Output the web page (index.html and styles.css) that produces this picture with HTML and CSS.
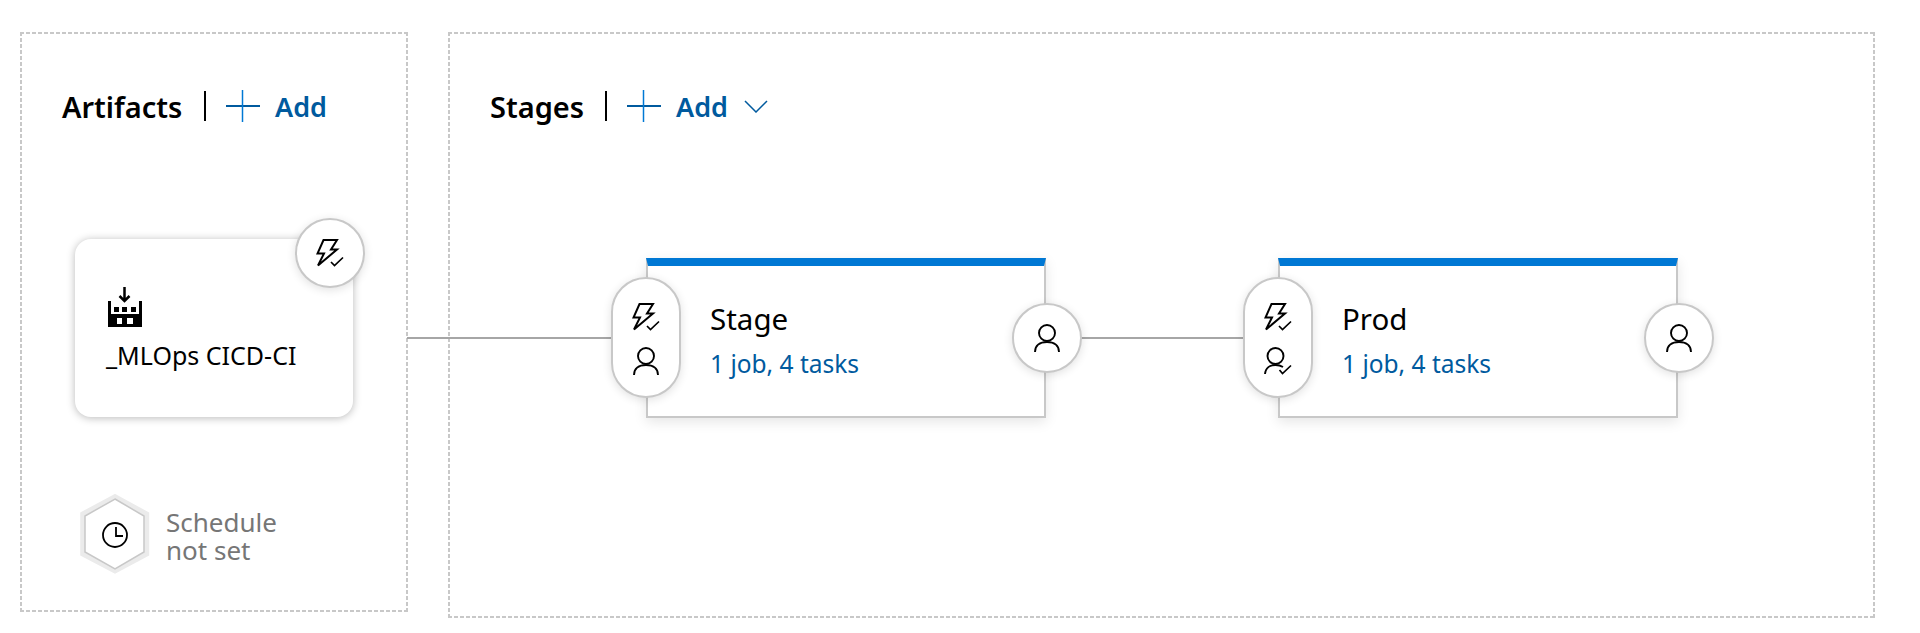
FILE: index.html
```html
<!DOCTYPE html>
<html>
<head>
<title>Pipeline</title>
<link rel="stylesheet" href="styles.css">
</head>
<body>

<div class="pipeline">
  <div class="link-artifact"></div>

  <div class="panel artifacts">
    <div class="panel-head">
      <span class="panel-title title-artifacts">Artifacts</span>
      <span class="sep sep-artifacts"></span>
      <svg class="plus" viewBox="0 0 34 32"><path class="plus-h" d="M0 16H34"/><path class="plus-v" d="M16.500 0V32"/></svg>
      <span class="add">Add</span>
    </div>

    <div class="artifact-card">
      <svg class="factory" viewBox="0 0 34 40">
        <path d="M0 14H3V27H31V14H34V40H0Z"/>
        <rect x="6" y="20" width="5" height="5"/>
        <rect x="14" y="20" width="5" height="5"/>
        <rect x="23" y="20" width="5" height="5"/>
        <rect class="window" x="9" y="31" width="5" height="6"/>
        <rect class="window" x="19" y="31" width="6" height="6"/>
        <path class="arrow" d="M16.500 0V13M11.500 9L16.500 14L21.500 9"/>
      </svg>
      <div class="artifact-name">_MLOps CICD-CI</div>
      <div class="round-btn artifact-trigger">
        <svg class="bolt" viewBox="0 0 28 28"><path class="bolt-shape" d="M7.500 1H21L15 10.500H21L2 26.500L8 14.500H1.500Z"/><path class="tick" d="M15 23L18.500 26.500L27 18.500"/></svg>
      </div>
    </div>

    <div class="schedule">
      <svg class="hex" viewBox="0 0 72 80">
        <polygon class="hex-out" points="36,2.700 67.700,20 67.700,60 36,77 3.700,60 3.700,20"/>
        <polygon class="hex-in" points="36,5 65,22 65,58 36,75 6,58 6,22"/>
        <circle class="clock" cx="36" cy="41" r="12"/>
        <path class="clock" d="M37 33V42H44"/>
      </svg>
      <div class="schedule-text">Schedule<br>not set</div>
    </div>
  </div>

  <div class="panel stages">
    <div class="panel-head">
      <span class="panel-title title-stages">Stages</span>
      <span class="sep sep-stages"></span>
      <svg class="plus" viewBox="0 0 34 32"><path class="plus-h" d="M0 16H34"/><path class="plus-v" d="M16.500 0V32"/></svg>
      <span class="add">Add</span>
      <svg class="chevron" viewBox="0 0 24 13"><path d="M1 1L12 12L23 1"/></svg>
    </div>

    <div class="stage-row">
      <div class="stage-card">
        <div class="stage-name">Stage</div>
        <div class="stage-tasks">1 job, 4 tasks</div>
        <div class="pill">
          <svg class="bolt" viewBox="0 0 28 28"><path class="bolt-shape" d="M7.500 1H21L15 10.500H21L2 26.500L8 14.500H1.500Z"/><path class="tick" d="M15 23L18.500 26.500L27 18.500"/></svg>
          <svg class="person" viewBox="0 0 26 28"><circle class="line" cx="13" cy="9" r="8"/><path class="line" d="M1 28C1 21.500 6 18 13 18S25 21.500 25 28"/></svg>
        </div>
        <div class="round-btn post">
          <svg class="person" viewBox="0 0 26 28"><circle class="line" cx="13" cy="9" r="8"/><path class="line" d="M1 28C1 21.500 6 18 13 18S25 21.500 25 28"/></svg>
        </div>
      </div>

      <div class="link-stage"></div>

      <div class="stage-card">
        <div class="stage-name">Prod</div>
        <div class="stage-tasks">1 job, 4 tasks</div>
        <div class="pill">
          <svg class="bolt" viewBox="0 0 28 28"><path class="bolt-shape" d="M7.500 1H21L15 10.500H21L2 26.500L8 14.500H1.500Z"/><path class="tick" d="M15 23L18.500 26.500L27 18.500"/></svg>
          <svg class="person-ok" viewBox="0 0 28 28"><circle class="line" cx="11.500" cy="9" r="8"/><path class="line" d="M1 27C1.500 21 6 18 11.500 18C14 18 16.500 18.500 19 20"/><path class="tick" d="M15.500 23L18.500 26.500L27 18.500"/></svg>
        </div>
        <div class="round-btn post">
          <svg class="person" viewBox="0 0 26 28"><circle class="line" cx="13" cy="9" r="8"/><path class="line" d="M1 28C1 21.500 6 18 13 18S25 21.500 25 28"/></svg>
        </div>
      </div>
    </div>
  </div>
</div>

</body>
</html>
```

FILE: styles.css
```css
body {
  margin: 0;
  background-color: white;
  font-family: "Noto Sans", "Open Sans", sans-serif;
  color: black;
  overflow: hidden;
}

svg {
  display: block;
  flex: none;
}

.pipeline {
  position: relative;
  display: flex;
  gap: 40px;
  padding: 32px 0 0 20px;
}

/* 4 on, 2 off dashes, the browser's own dashed border is too sparse */
.panel {
  box-sizing: border-box;
  padding: 58px 0 0 42px;
  background-image:
    linear-gradient(90deg, #c8c8c8 4px, transparent 4px),
    linear-gradient(90deg, #c8c8c8 4px, transparent 4px),
    linear-gradient(#c8c8c8 4px, transparent 4px),
    linear-gradient(#c8c8c8 4px, transparent 4px);
  background-size: 6px 2px, 6px 2px, 2px 6px, 2px 6px;
  background-position: left top, left bottom, left top, right top;
  background-repeat: repeat-x, repeat-x, repeat-y, repeat-y;
}

.artifacts {
  width: 388px;
  height: 580px;
}

.stages {
  width: 1427px;
  height: 586px;
}

.panel-head {
  display: flex;
  align-items: center;
  height: 32px;
}

.panel-title {
  font-size: 29px;
  font-weight: 600;
  line-height: 32px;
  margin-top: 2px;
}

.title-artifacts {
  width: 142px;
}

.title-stages {
  width: 115px;
}

.sep {
  width: 2px;
  height: 30px;
  margin-right: 20px;
  background-color: black;
}

.plus {
  width: 34px;
  height: 32px;
  margin-right: 15px;
}

.plus-h {
  stroke: #005a9e;
  stroke-width: 2;
}

.plus-v {
  stroke: #0078d4;
  stroke-width: 1.500;
}

.add {
  width: 52px;
  font-size: 27px;
  font-weight: 600;
  line-height: 32px;
  margin-top: 2px;
  color: #005a9e;
}

.chevron {
  width: 24px;
  height: 13px;
  margin-left: 16px;
  fill: none;
  stroke: #005a9e;
  stroke-width: 1.500;
}

.artifact-card {
  position: relative;
  box-sizing: border-box;
  width: 278px;
  height: 178px;
  margin: 117px 0 0 13px;
  padding: 48px 0 0 33px;
  border-radius: 16px;
  background-color: white;
  box-shadow: 0 1px 8px rgba(0, 0, 0, 0.28);
}

.factory {
  width: 34px;
  height: 40px;
}

.factory .window {
  fill: white;
}

.factory .arrow {
  fill: none;
  stroke: black;
  stroke-width: 2.500;
}

.artifact-name {
  margin: 12px 0 0 -2px;
  font-size: 25px;
  line-height: 32px;
  white-space: nowrap;
}

.round-btn {
  position: absolute;
  box-sizing: border-box;
  display: flex;
  align-items: center;
  justify-content: center;
  width: 70px;
  height: 70px;
  border: 2px solid #c8c8c8;
  border-radius: 50%;
  background-color: white;
  box-shadow: 0 2px 10px rgba(0, 0, 0, 0.12);
}

.artifact-trigger {
  top: -21px;
  right: -12px;
}

.bolt {
  width: 28px;
  height: 28px;
}

.bolt-shape {
  fill: none;
  stroke: black;
  stroke-width: 2;
}

.tick {
  fill: none;
  stroke: black;
  stroke-width: 1.700;
}

.line {
  fill: none;
  stroke: black;
  stroke-width: 1.900;
}

.person {
  width: 26px;
  height: 28px;
}

.person-ok {
  width: 28px;
  height: 28px;
}

.schedule {
  display: flex;
  align-items: center;
  margin: 77px 0 0 17px;
}

.hex {
  width: 72px;
  height: 80px;
}

.hex-out {
  fill: white;
  stroke: #ebebeb;
  stroke-width: 5;
}

.hex-in {
  fill: white;
  stroke: #c8c8c8;
  stroke-width: 1.500;
}

.clock {
  fill: none;
  stroke: black;
  stroke-width: 1.800;
}

.schedule-text {
  margin-left: 15px;
  padding-top: 4px;
  font-size: 26px;
  line-height: 28px;
  color: #767676;
}

.stage-row {
  display: flex;
  align-items: center;
  margin: 136px 0 0 156px;
}

.stage-card {
  position: relative;
  box-sizing: border-box;
  width: 400px;
  height: 160px;
  padding: 33px 0 0 62px;
  border: 2px solid #c8c8c8;
  border-top: 8px solid #0078d4;
  background-color: white;
  box-shadow: 0 4px 12px rgba(0, 0, 0, 0.1);
}

.stage-name {
  font-size: 29.500px;
  line-height: 40px;
}

.stage-tasks {
  margin-top: 9px;
  font-size: 24.500px;
  line-height: 32px;
  color: #005a9e;
}

.pill {
  position: absolute;
  top: 11px;
  left: -37px;
  box-sizing: border-box;
  display: flex;
  flex-direction: column;
  align-items: center;
  gap: 16px;
  width: 70px;
  height: 121px;
  padding-top: 24px;
  border: 2px solid #c8c8c8;
  border-radius: 35px;
  background-color: white;
  box-shadow: 0 2px 10px rgba(0, 0, 0, 0.12);
}

.post {
  top: 37px;
  right: -38px;
}

.link-stage {
  width: 232px;
  height: 2px;
  background-color: #a6a6a6;
}

.link-artifact {
  position: absolute;
  top: 337px;
  left: 407px;
  width: 206px;
  height: 2px;
  background-color: #a6a6a6;
}
```
